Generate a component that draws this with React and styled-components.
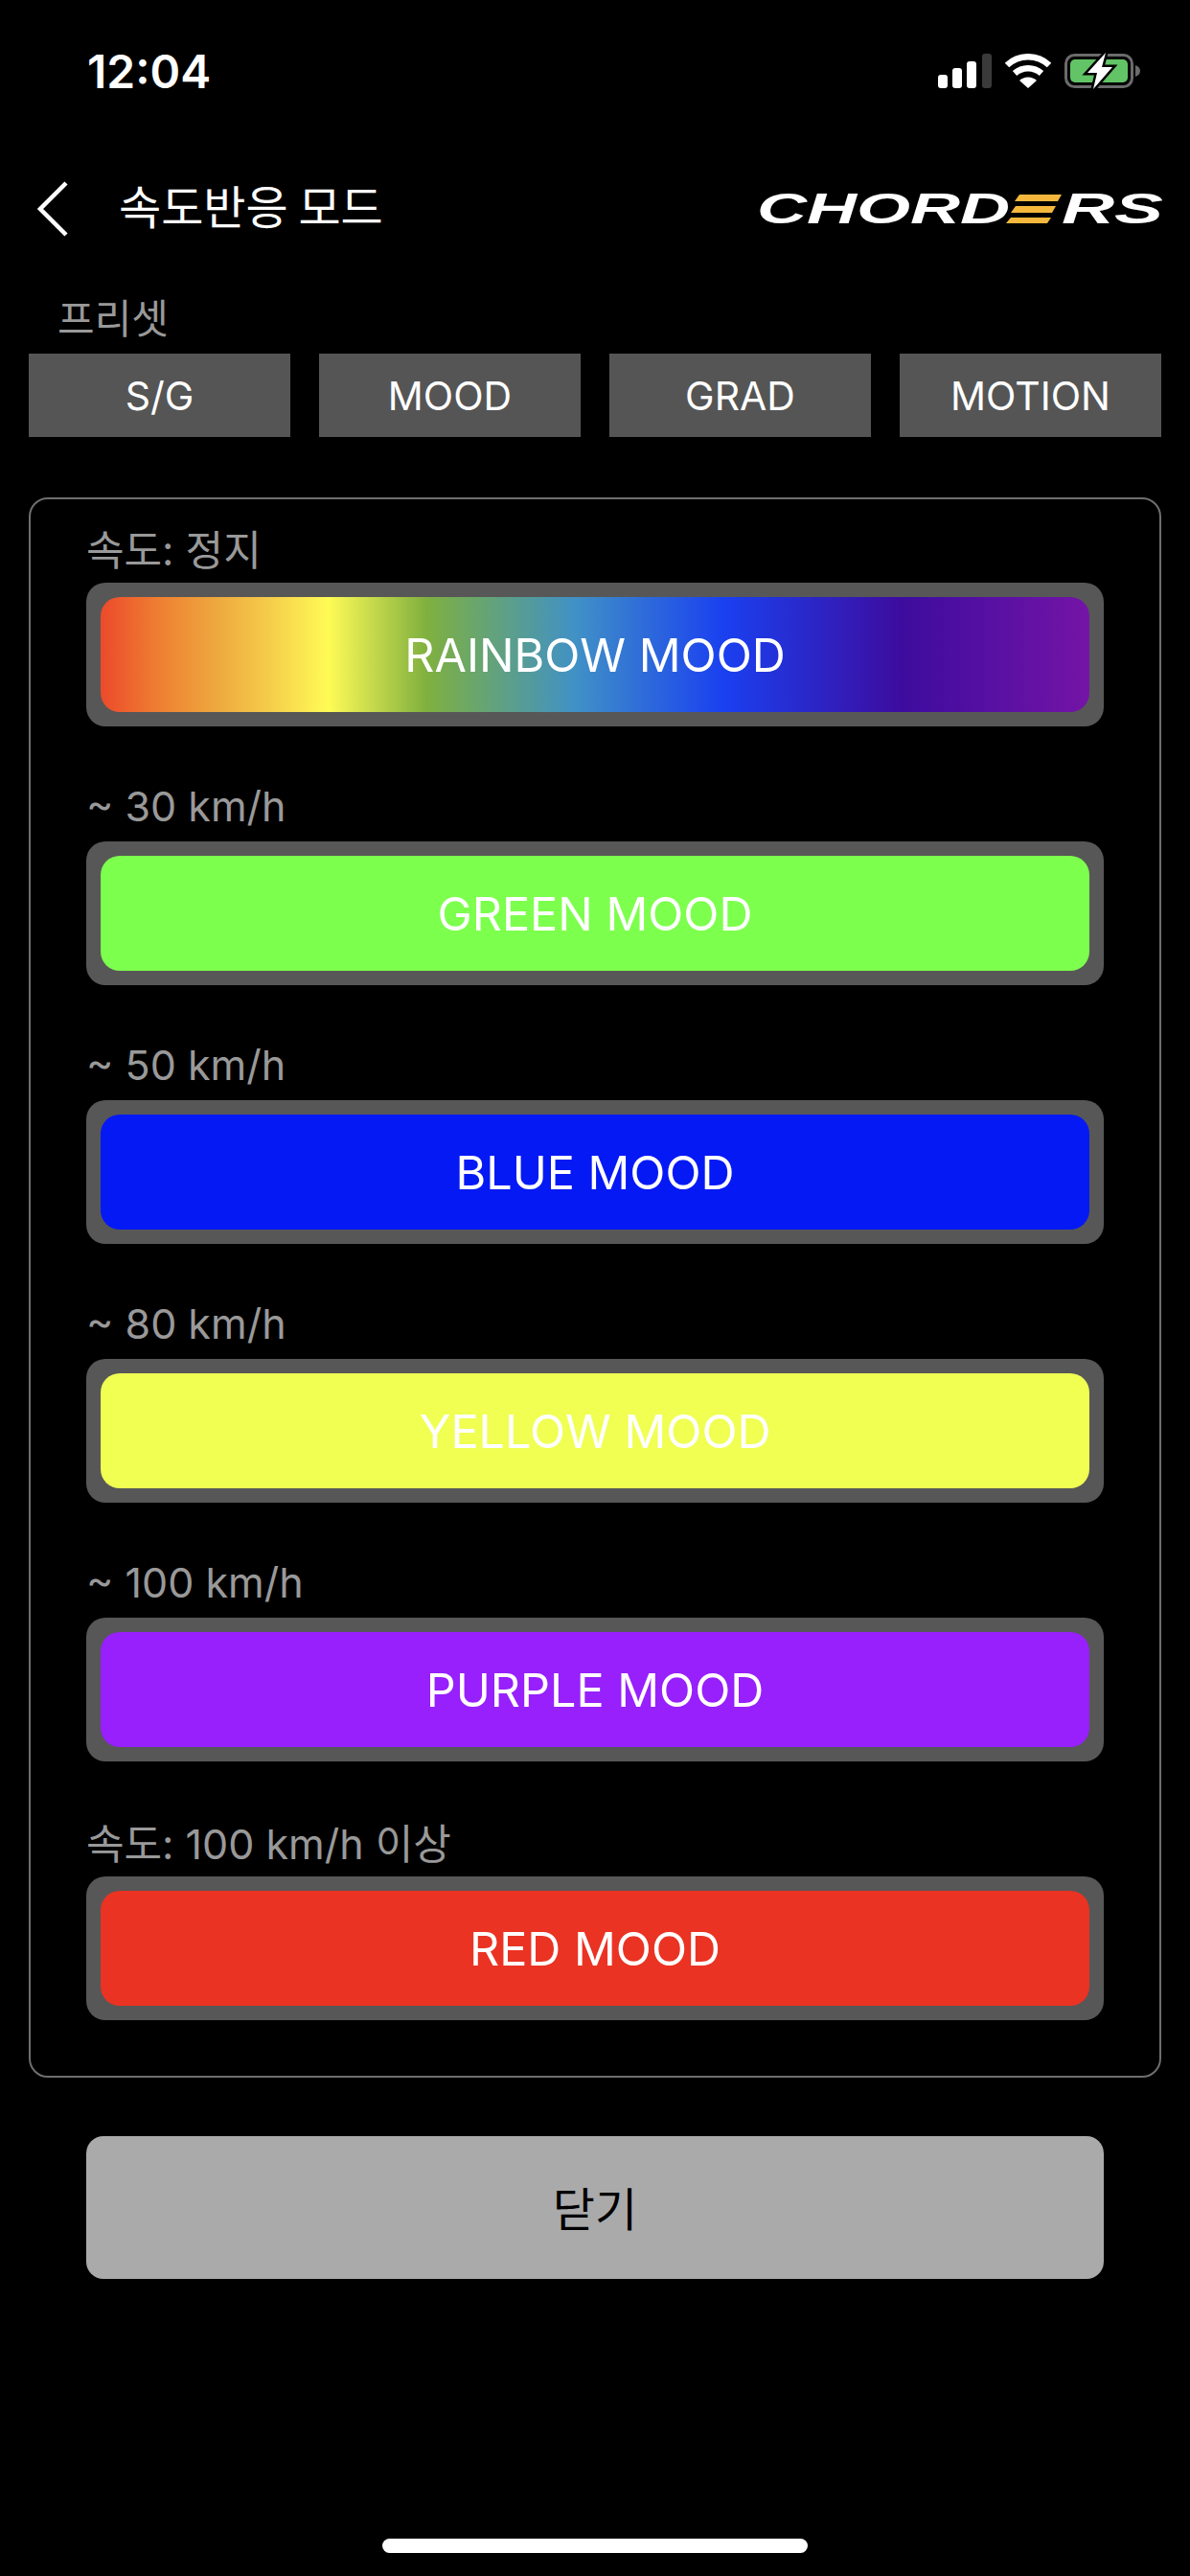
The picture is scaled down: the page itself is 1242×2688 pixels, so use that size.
import React from 'react'
import styled, { createGlobalStyle } from 'styled-components'

const GlobalStyle = createGlobalStyle`
  html, body {
    margin: 0;
    padding: 0;
    background: #000;
  }
  * {
    box-sizing: border-box;
  }
`

const Page = styled.div`
  width: 1242px;
  height: 2688px;
  background: #000;
  display: flex;
  flex-direction: column;
  font-family: Inter, "Noto Sans CJK KR", sans-serif;
  color: #fff;
  overflow: hidden;
`

const StatusBar = styled.div`
  height: 148px;
  padding: 0 51px 0 91px;
  display: flex;
  align-items: center;
  justify-content: space-between;
`

const Time = styled.span`
  font-size: 48px;
  font-weight: 600;
`

const StatusIcons = styled.div`
  display: flex;
  align-items: center;
  gap: 14px;
`

const Header = styled.div`
  height: 132px;
  padding: 4px 30px 0 36px;
  display: flex;
  align-items: center;
`

const BackIcon = styled.svg`
  width: 36px;
  height: 58px;
  flex: none;
  margin-top: 3px;
`

const Title = styled.h1`
  margin: 0 0 0 52px;
  padding-bottom: 6px;
  font-size: 48px;
  font-weight: 400;
  font-family: "Noto Sans CJK KR", sans-serif;
  flex: 1;
`

const PresetLabel = styled.div`
  height: 89px;
  padding: 9px 0 0 60px;
  display: flex;
  align-items: center;
  font-size: 42px;
  color: #999;
  font-family: "Noto Sans CJK KR", sans-serif;
`

const PresetRow = styled.div`
  margin: 0 30px;
  display: grid;
  grid-template-columns: repeat(4, 273px);
  justify-content: space-between;
`

const PresetButton = styled.div`
  height: 87px;
  background: #555;
  display: flex;
  align-items: center;
  justify-content: center;
  font-size: 41px;
`

const Panel = styled.div`
  margin: 63px 30px 0;
  height: 1649px;
  border: 2px solid #6e6e6e;
  border-radius: 20px;
  padding: 13px 58px 0;
  display: flex;
  flex-direction: column;
  gap: 46px;
`

const SpeedRow = styled.div`
  display: flex;
  flex-direction: column;
`

const SpeedLabel = styled.div`
  height: 74px;
  display: flex;
  align-items: center;
  font-size: 43px;
  color: #999;
`

const MoodTrack = styled.div`
  height: 150px;
  padding: 15px;
  background: #575757;
  border-radius: 20px;
`

const MoodFill = styled.div`
  height: 120px;
  border-radius: 20px;
  background: ${({ $bg }) => $bg};
  display: flex;
  align-items: center;
  justify-content: center;
  font-size: 48.5px;
`

const CloseButton = styled.div`
  margin: 61px 90px 0;
  height: 149px;
  padding-bottom: 4px;
  background: #aaa;
  border-radius: 18px;
  display: flex;
  align-items: center;
  justify-content: center;
  font-size: 48px;
  color: #000;
  font-family: "Noto Sans CJK KR", sans-serif;
`

const HomeBar = styled.div`
  margin: auto auto 24px;
  width: 444px;
  height: 15px;
  border-radius: 8px;
  background: #fff;
`

const LogoSvg = styled.svg`
  width: 420px;
  height: 32px;
  flex: none;
  margin-top: 4px;
  overflow: visible;
`

const RAINBOW =
  'linear-gradient(90deg, #ec4a2b 0%, #ee8032 6%, #eeaa3f 12%, #f5cc4a 17%, #fffb56 23%, #7fb03f 33%, #4091c6 48%, #1a40f0 63%, #3d0c9e 81%, #7414a6 100%)'

const PRESETS = ['S/G', 'MOOD', 'GRAD', 'MOTION']

const MOODS = [
  { label: '속도: 정지', name: 'RAINBOW MOOD', bg: RAINBOW },
  { label: '~ 30 km/h', name: 'GREEN MOOD', bg: '#7dff4d' },
  { label: '~ 50 km/h', name: 'BLUE MOOD', bg: '#0519f5' },
  { label: '~ 80 km/h', name: 'YELLOW MOOD', bg: '#f0ff52' },
  { label: '~ 100 km/h', name: 'PURPLE MOOD', bg: '#9720fc' },
  { label: '속도: 100 km/h 이상', name: 'RED MOOD', bg: '#ea3323' },
]

function SignalIcon() {
  return (
    <svg width="56" height="36" viewBox="0 0 56 36">
      <rect x="0" y="22" width="10" height="14" rx="3" fill="#fff" />
      <rect x="15" y="15" width="10" height="21" rx="3" fill="#fff" />
      <rect x="30" y="8" width="10" height="28" rx="3" fill="#fff" />
      <rect x="46" y="0" width="10" height="36" rx="3" fill="#3a3a3a" />
    </svg>
  )
}

function WifiIcon() {
  return (
    <svg width="48" height="36" viewBox="0 0 48 36">
      <path d="M2 12 A32 32 0 0 1 46 12" fill="none" stroke="#fff" strokeWidth="6.5" />
      <path d="M10 20.5 A21 21 0 0 1 38 20.5" fill="none" stroke="#fff" strokeWidth="6.5" />
      <path d="M15 28 L24 36 L33 28 A13 13 0 0 0 15 28 Z" fill="#fff" />
    </svg>
  )
}

function BatteryIcon() {
  return (
    <svg width="80" height="38" viewBox="0 0 80 38">
      <rect x="1.5" y="2.5" width="69" height="33" rx="9" fill="none" stroke="#6b6b6b" strokeWidth="3" />
      <rect x="6" y="7" width="60" height="24" rx="5" fill="#62c466" />
      <path d="M74 13 C77 14 79 16 79 19 C79 22 77 24 74 25 Z" fill="#6b6b6b" />
      <path d="M43 0 L24 21 L34 21 L30 38 L50 15 L39 15 Z" fill="#000" stroke="#000" strokeWidth="5" />
      <path d="M43 0 L24 21 L34 21 L30 38 L50 15 L39 15 Z" fill="#fff" />
    </svg>
  )
}

function Logo() {
  return (
    <LogoSvg viewBox="0 0 420 32">
      <text
        x="-2"
        y="31"
        textLength="264"
        lengthAdjust="spacingAndGlyphs"
        fontFamily="Liberation Sans"
        fontWeight="700"
        fontStyle="italic"
        fontSize="44"
        fill="#fff"
      >
        CHORD
      </text>
      <text
        x="316"
        y="31"
        textLength="106"
        lengthAdjust="spacingAndGlyphs"
        fontFamily="Liberation Sans"
        fontWeight="700"
        fontStyle="italic"
        fontSize="44"
        fill="#fff"
      >
        RS
      </text>
      <polygon points="272,1 316,1 312,8 267,8" fill="#f5b83d" />
      <polygon points="268,13 310,13 306,20 263,20" fill="#f5b83d" />
      <polygon points="263,25 305,25 301,31 258,31" fill="#f5b83d" />
    </LogoSvg>
  )
}

export default function App() {
  return (
    <Page>
      <GlobalStyle />
      <StatusBar>
        <Time>12:04</Time>
        <StatusIcons>
          <SignalIcon />
          <WifiIcon />
          <BatteryIcon />
        </StatusIcons>
      </StatusBar>
      <Header>
        <BackIcon viewBox="0 0 36 58">
          <path d="M33 2 L6 29 L33 56" fill="none" stroke="#fff" strokeWidth="4.5" />
        </BackIcon>
        <Title>속도반응 모드</Title>
        <Logo />
      </Header>
      <PresetLabel>프리셋</PresetLabel>
      <PresetRow>
        {PRESETS.map((name) => (
          <PresetButton key={name}>{name}</PresetButton>
        ))}
      </PresetRow>
      <Panel>
        {MOODS.map(({ label, name, bg }) => (
          <SpeedRow key={name}>
            <SpeedLabel>{label}</SpeedLabel>
            <MoodTrack>
              <MoodFill $bg={bg}>{name}</MoodFill>
            </MoodTrack>
          </SpeedRow>
        ))}
      </Panel>
      <CloseButton>닫기</CloseButton>
      <HomeBar />
    </Page>
  )
}
